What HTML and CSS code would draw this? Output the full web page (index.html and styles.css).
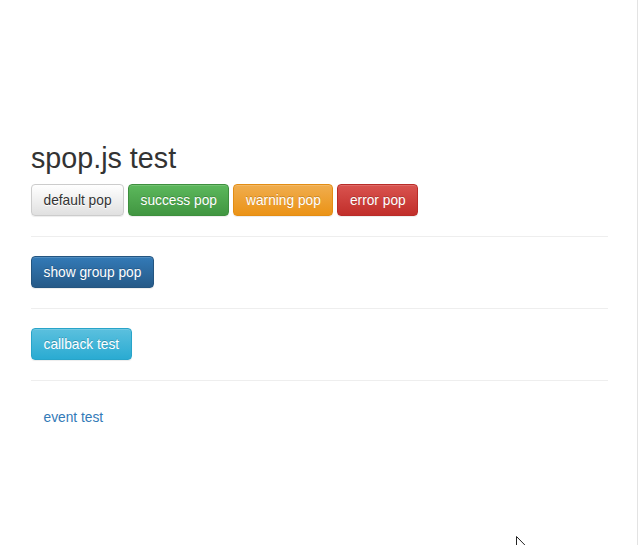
FILE: index.html
```html
<!DOCTYPE html>
<html>
<head>
<meta charset="utf-8">
<link rel="stylesheet" href="styles.css">
</head>
<body>
<div class="frame">
  <div class="container">
    <h2 class="title">spop.js test</h2>
    <div class="btn-row">
      <button class="btn btn-default">default pop</button>
      <button class="btn btn-success">success pop</button>
      <button class="btn btn-warning">warning pop</button>
      <button class="btn btn-danger">error pop</button>
    </div>
    <hr class="sep">
    <div class="btn-row">
      <button class="btn btn-primary">show group pop</button>
    </div>
    <hr class="sep">
    <div class="btn-row">
      <button class="btn btn-info">callback test</button>
    </div>
    <hr class="sep">
    <div class="btn-row">
      <button class="btn btn-link">event test</button>
    </div>
  </div>
  <svg class="cursor" width="12" height="19" viewBox="0 0 12 19"><path d="M0.5 0.5 L0.5 16 L4.3 12.3 L6.8 18 L8.8 17.1 L6.4 11.5 L11.3 11.5 Z" fill="#fff" stroke="#222" stroke-width="1"/></svg>
</div>
</body>
</html>
```
FILE: styles.css
```css
html, body {
  margin: 0;
  padding: 0;
  background: #fff;
}
body {
  font-family: "Liberation Sans", Arial, sans-serif;
  color: #333;
}
.frame {
  position: relative;
  width: 637px;
  height: 545px;
  border-right: 1px solid #e3e3e3;
  overflow: hidden;
}
.container {
  width: 577px;
  padding: 143px 0 0 31px;
}
.title {
  margin: 0 0 10px;
  font-size: 28.7px;
  font-weight: 500;
  line-height: 31px;
  color: #333;
}
.btn-row {
  display: flex;
  gap: 4px;
}
.sep {
  margin: 20px 0 19px;
  border: 0;
  border-top: 1px solid #eee;
  height: 0;
}
.btn {
  font-family: "Liberation Sans", Arial, sans-serif;
  font-size: 13.75px;
  line-height: 20px;
  padding: 6px 11.5px 4px;
  border: 1px solid transparent;
  border-radius: 4px;
  background: none;
  cursor: pointer;
  box-shadow: inset 0 1px 0 rgba(255,255,255,.15), 0 1px 1px rgba(0,0,0,.075);
  color: #fff;
  text-shadow: 0 -1px 0 rgba(0,0,0,.2);
}
.btn-default {
  color: #333;
  text-shadow: 0 1px 0 #fff;
  background-image: linear-gradient(to bottom, #fff 0, #e0e0e0 100%);
  border-color: #ccc;
}
.btn-success {
  background-image: linear-gradient(to bottom, #5cb85c 0, #419641 100%);
  border-color: #3e8f3e;
}
.btn-warning {
  background-image: linear-gradient(to bottom, #f0ad4e 0, #eb9316 100%);
  border-color: #e38d13;
}
.btn-danger {
  background-image: linear-gradient(to bottom, #d9534f 0, #c12e2a 100%);
  border-color: #b92c28;
}
.btn-primary {
  background-image: linear-gradient(to bottom, #337ab7 0, #265a88 100%);
  border-color: #245580;
}
.btn-info {
  background-image: linear-gradient(to bottom, #5bc0de 0, #2aabd2 100%);
  border-color: #28a4c9;
}
.btn-link {
  color: #337ab7;
  text-shadow: none;
  box-shadow: none;
  padding-top: 7px;
  padding-bottom: 3px;
}
.cursor {
  position: absolute;
  left: 516px;
  top: 536px;
}
```
